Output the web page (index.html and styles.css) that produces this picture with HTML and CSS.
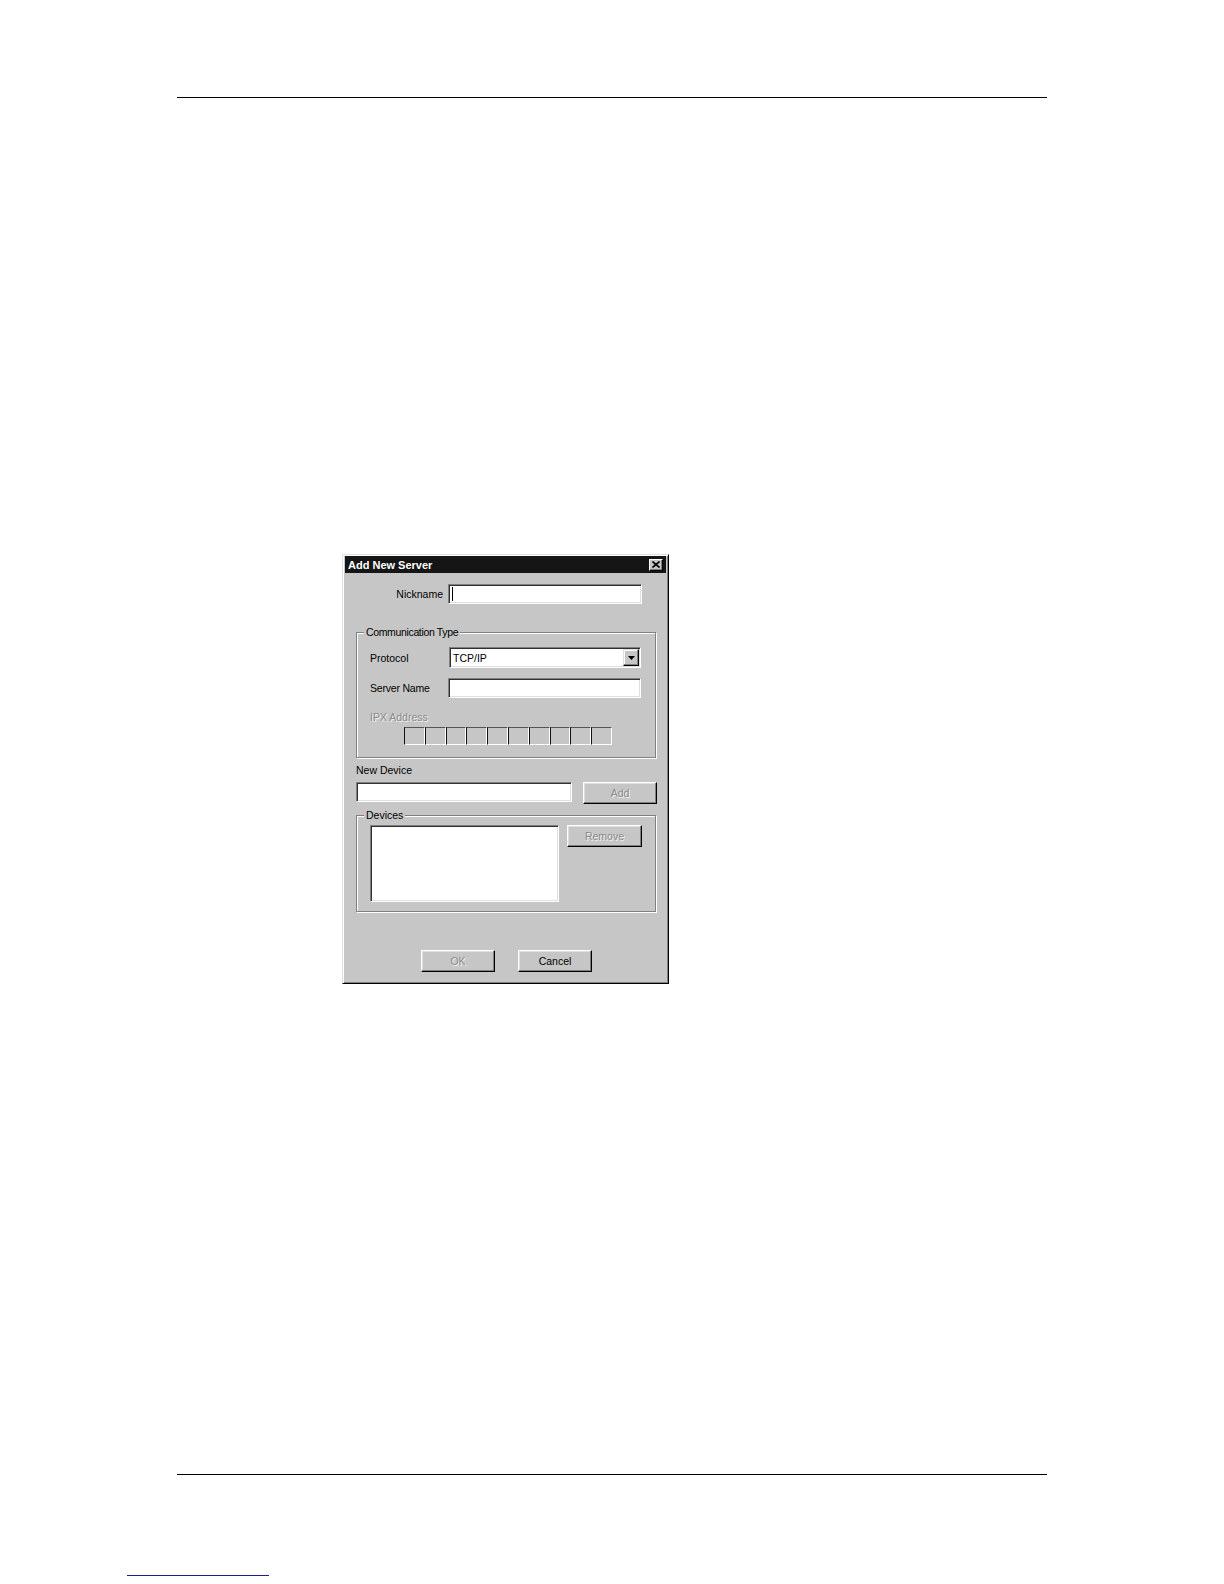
FILE: index.html
```html
<!DOCTYPE html>
<html lang="en">
<head>
<meta charset="utf-8">
<title>Add New Server</title>
<link rel="stylesheet" href="styles.css">
</head>
<body>
<div class="page">
  <div class="rule"></div>

  <div class="dialog">
    <div class="titlebar">
      <span class="title">Add New Server</span>
      <span class="close-btn">
        <svg width="8" height="7" viewBox="0 0 8 7"><path d="M0.5 0.5 L7.5 6.5 M7.5 0.5 L0.5 6.5" stroke="#000" stroke-width="1.6" fill="none"/></svg>
      </span>
    </div>

    <div class="nick-row">
      <span class="nick-label">Nickname</span>
      <div class="field nick-field"><span class="caret"></span></div>
    </div>

    <div class="group comm">
      <span class="legend comm-legend">Communication Type</span>
      <div class="row">
        <span class="row-label proto-label">Protocol</span>
        <div class="select">
          <span class="select-text">TCP/IP</span>
          <span class="drop-btn">
            <svg width="7" height="4" viewBox="0 0 7 4"><path d="M0 0 H7 L3.5 4 Z" fill="#000"/></svg>
          </span>
        </div>
      </div>
      <div class="row server-row">
        <span class="row-label server-label">Server Name</span>
        <div class="field server-field"></div>
      </div>
      <div class="ipx-label disabled">IPX Address</div>
      <div class="ipx-boxes">
        <span class="ipx-box"></span><span class="ipx-box"></span><span class="ipx-box"></span><span class="ipx-box"></span><span class="ipx-box"></span><span class="ipx-box"></span><span class="ipx-box"></span><span class="ipx-box"></span><span class="ipx-box"></span><span class="ipx-box"></span>
      </div>
    </div>

    <div class="device-label">New Device</div>
    <div class="device-row">
      <div class="field device-field"></div>
      <div class="btn disabled add-btn">Add</div>
    </div>

    <div class="group devices">
      <span class="legend">Devices</span>
      <div class="field list-box"></div>
      <div class="btn disabled remove-btn">Remove</div>
    </div>

    <div class="actions">
      <div class="btn disabled">OK</div>
      <div class="btn">Cancel</div>
    </div>
  </div>

  <div class="rule bottom-rule"></div>
  <div class="footer-line"></div>
</div>
</body>
</html>
```

FILE: styles.css
```css
* { box-sizing: border-box; }

body {
  margin: 0;
  background: #fff;
  font-family: "Liberation Sans", Arial, sans-serif;
}

.page {
  padding-top: 97px;
  height: 1584px;
  overflow: hidden;
}

.rule {
  margin-left: 177px;
  width: 870px;
  height: 1px;
  background: #000;
}

.bottom-rule {
  margin-top: 490px;
}

.footer-line {
  margin-top: 100px;
  margin-left: 127px;
  width: 142px;
  height: 1px;
  background: #1c2090;
}

/* ---------- dialog ---------- */
.dialog {
  margin: 456px 0 0 342px;
  width: 327px;
  height: 430px;
  overflow: hidden;
  background: #c6c6c6;
  border: 1px solid;
  border-color: #dfdfdf #000 #000 #dfdfdf;
  box-shadow: inset 1px 1px 0 #fff, inset -1px -1px 0 #808080;
  padding: 1px 2px 2px;
  font-size: 10.5px;
  line-height: 12px;
  color: #000;
}

.titlebar {
  height: 17px;
  background: #151515;
  display: flex;
  align-items: center;
  justify-content: space-between;
  padding: 0 3px 0 3px;
  color: #fff;
  font-weight: bold;
  font-size: 11px;
}

.close-btn {
  width: 14px;
  height: 12px;
  background: #c6c6c6;
  border: 1px solid;
  border-color: #fff #000 #000 #fff;
  box-shadow: inset -1px -1px 0 #808080;
  display: flex;
  align-items: center;
  justify-content: center;
}

.close-btn svg { display: block; }

/* sunken field */
.field {
  background: #fff;
  border: 1px solid;
  border-color: #808080 #fff #fff #808080;
  box-shadow: inset 1px 1px 0 #303030, inset -1px -1px 0 #dfdfdf;
}

/* raised button */
.btn {
  width: 74px;
  height: 22px;
  background: #c6c6c6;
  border: 1px solid;
  border-color: #fff #000 #000 #fff;
  box-shadow: inset -1px -1px 0 #808080, inset 1px 1px 0 #dfdfdf;
  display: flex;
  align-items: center;
  justify-content: center;
}

.disabled {
  color: #8a8a8a;
  text-shadow: 1px 1px 0 #f2f2f2;
}

/* nickname */
.nick-row {
  margin-top: 11px;
  display: flex;
  align-items: center;
}

.nick-label {
  width: 98px;
  text-align: right;
  margin-right: 5px;
}

.nick-field {
  width: 194px;
  height: 20px;
  display: flex;
  align-items: center;
  padding-left: 3px;
}

.caret {
  width: 1px;
  height: 14px;
  background: #000;
}

/* group boxes */
.group {
  position: relative;
  margin-left: 11px;
  width: 300px;
  border: 1px solid #808080;
  box-shadow: 1px 1px 0 #fff, inset 1px 1px 0 #fff;
}

.legend {
  position: absolute;
  top: -7px;
  left: 7px;
  padding: 0 2px;
  background: #c6c6c6;
  line-height: 12px;
}

.comm-legend {
  letter-spacing: -0.35px;
}

.comm {
  margin-top: 28px;
  height: 126px;
  padding: 14px 0 0 13px;
}

.row {
  display: flex;
  align-items: center;
}

.proto-label { width: 79px; }
.server-label { width: 78px; letter-spacing: -0.2px; }

.select {
  width: 192px;
  height: 21px;
  background: #fff;
  border: 1px solid;
  border-color: #808080 #fff #fff #808080;
  box-shadow: inset 1px 1px 0 #303030, inset -1px -1px 0 #dfdfdf;
  padding: 1px;
  display: flex;
  align-items: center;
}

.select-text {
  flex: 1;
  padding-left: 2px;
}

.drop-btn {
  width: 16px;
  height: 17px;
  background: #c6c6c6;
  border: 1px solid;
  border-color: #dfdfdf #000 #000 #dfdfdf;
  box-shadow: inset -1px -1px 0 #808080, inset 1px 1px 0 #fff;
  display: flex;
  align-items: center;
  justify-content: center;
}

.drop-btn svg { display: block; }

.server-row { margin-top: 10px; }

.server-field {
  width: 193px;
  height: 20px;
}

.ipx-label {
  margin-top: 13px;
}

.ipx-boxes {
  margin-top: 4px;
  margin-left: 34px;
  width: 208px;
  height: 18px;
  display: flex;
}

.ipx-box {
  flex: 1;
  border: 1px solid;
  border-color: #555 #fff #fff #111;
}

/* new device */
.device-label {
  margin-top: 6px;
  margin-left: 11px;
}

.device-row {
  margin-top: 6px;
  margin-left: 11px;
  display: flex;
  gap: 11px;
}

.device-field {
  width: 216px;
  height: 20px;
}

/* devices group */
.devices {
  margin-top: 11px;
  height: 97px;
  padding: 9px 0 0 13px;
  display: flex;
  align-items: flex-start;
  gap: 8px;
}

.list-box {
  width: 189px;
  height: 77px;
}

.remove-btn { width: 75px; }

/* OK / Cancel */
.actions {
  margin-top: 38px;
  padding-left: 76px;
  display: flex;
  gap: 23px;
}
```
